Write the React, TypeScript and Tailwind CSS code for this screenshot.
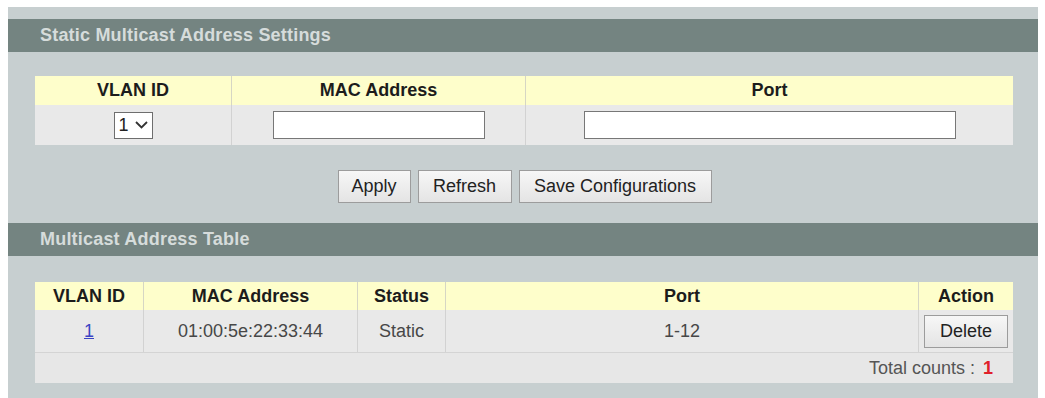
import React from 'react'

const Btn = ({ label, className = '' }: { label: string; className?: string }) => (
    <button className={`h-[33px] border border-[#9c9c9c] bg-gradient-to-b from-[#f7f7f7] to-[#e4e4e4] text-[18px] text-[#222] ${className}`}>
        {label}
    </button>
)

const SectionBar = ({ title }: { title: string }) => (
    <div className="h-[33px] bg-[#748481] flex items-center pl-[32px]">
        <span className="text-[18px] font-bold text-[#d6dcdb] tracking-[0.2px]">{title}</span>
    </div>
)

const App = () => {
    return (
        <div className="w-[1045px] h-[398px] bg-white font-['Liberation_Sans',Arial,sans-serif] overflow-hidden">
            <div className="ml-[8px] mr-[7px] mt-[7px] bg-[#c7cfd0] pt-[12px] pb-[15px]">
                <SectionBar title="Static Multicast Address Settings" />

                {/* settings table */}
                <div className="mt-[24px] ml-[27px] w-[978px]">
                    <div className="grid grid-cols-[197px_294px_487px] h-[29px] bg-[#fefecb] text-[18px] font-bold text-[#1c1c1c]">
                        <div className="flex items-center justify-center border-r border-[#d6d6c4]">VLAN ID</div>
                        <div className="flex items-center justify-center border-r border-[#d6d6c4]">MAC Address</div>
                        <div className="flex items-center justify-center">Port</div>
                    </div>
                    <div className="grid grid-cols-[197px_294px_487px] h-[40px] bg-[#e9e9e9]">
                        <div className="flex items-center justify-center border-r border-[#d2d2d2]">
                            <div className="w-[39px] h-[27px] border border-[#6e6e6e] bg-white flex items-center justify-center gap-[6px] text-[18px] text-[#222]">
                                <span>1</span>
                                <svg width="13" height="8" viewBox="0 0 13 8" fill="none" stroke="#333" strokeWidth="1.8">
                                    <path d="M1 1l5.5 5.5L12 1" />
                                </svg>
                            </div>
                        </div>
                        <div className="flex items-center justify-center border-r border-[#d2d2d2]">
                            <input className="w-[212px] h-[28px] border border-[#777] bg-white outline-none" />
                        </div>
                        <div className="flex items-center justify-center">
                            <input className="w-[372px] h-[28px] border border-[#777] bg-white outline-none" />
                        </div>
                    </div>
                </div>

                <div className="mt-[25px] flex justify-center gap-[7px] pl-[3px]">
                    <Btn label="Apply" className="w-[73px]" />
                    <Btn label="Refresh" className="w-[94px]" />
                    <Btn label="Save Configurations" className="w-[193px]" />
                </div>

                <div className="mt-[20px]">
                    <SectionBar title="Multicast Address Table" />
                </div>

                {/* address table */}
                <div className="mt-[26px] ml-[27px] w-[978px]">
                    <div className="grid grid-cols-[109px_214px_88px_473px_94px] h-[28px] bg-[#fefecb] text-[18px] font-bold text-[#1c1c1c]">
                        <div className="flex items-center justify-center border-r border-[#d6d6c4]">VLAN ID</div>
                        <div className="flex items-center justify-center border-r border-[#d6d6c4]">MAC Address</div>
                        <div className="flex items-center justify-center border-r border-[#d6d6c4]">Status</div>
                        <div className="flex items-center justify-center border-r border-[#d6d6c4]">Port</div>
                        <div className="flex items-center justify-center">Action</div>
                    </div>
                    <div className="grid grid-cols-[109px_214px_88px_473px_94px] h-[43px] bg-[#e9e9e9] text-[18px] text-[#474747] border-b border-[#d4d4d4]">
                        <div className="flex items-center justify-center border-r border-[#d2d2d2]">
                            <a className="text-[#3b44c4] underline">1</a>
                        </div>
                        <div className="flex items-center justify-center border-r border-[#d2d2d2]">01:00:5e:22:33:44</div>
                        <div className="flex items-center justify-center border-r border-[#d2d2d2]">Static</div>
                        <div className="flex items-center justify-center border-r border-[#d2d2d2]">1-12</div>
                        <div className="flex items-center justify-center">
                            <Btn label="Delete" className="w-[84px]" />
                        </div>
                    </div>
                    <div className="h-[30px] bg-[#e7e7e7] flex items-center justify-end pr-[20px] text-[18px] text-[#555]">
                        <span>Total counts :</span>
                        <span className="ml-[8px] font-bold text-[#e0202a]">1</span>
                    </div>
                </div>
            </div>
        </div>
    )
}

export default App
